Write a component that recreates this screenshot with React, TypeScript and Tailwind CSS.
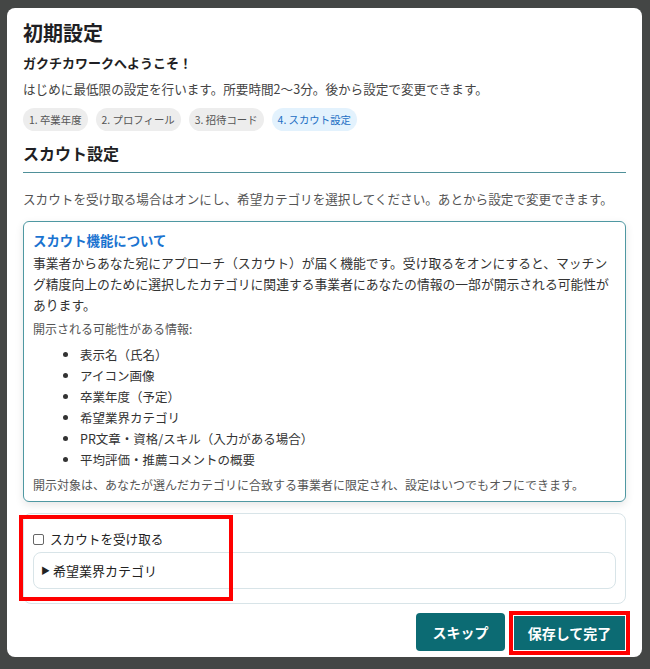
import React from "react";

const font = { fontFamily: '"Noto Sans CJK JP", "Noto Sans", sans-serif' };

const steps = ["1. 卒業年度", "2. プロフィール", "3. 招待コード", "4. スカウト設定"];
const items = [
  "表示名（氏名）",
  "アイコン画像",
  "卒業年度（予定）",
  "希望業界カテゴリ",
  "PR文章・資格/スキル（入力がある場合）",
  "平均評価・推薦コメントの概要",
];

export default function App() {
  return (
    <div className="w-[650px] h-[669px] bg-[#444645] pt-[8px] pl-[7px] overflow-hidden" style={font}>
      <div className="w-[635px] h-[649px] bg-white rounded-[8px] px-[16px] pt-[12px] flex flex-col">
        <h1 className="shrink-0 text-[20px] leading-[26px] font-bold text-[#1f1f24]">初期設定</h1>
        <p className="shrink-0 mt-[8px] text-[13px] leading-[18px] font-bold text-[#1f1f24]">ガクチカワークへようこそ！</p>
        <p className="shrink-0 mt-[8px] text-[12.6px] leading-[18px] text-[#444]">
          はじめに最低限の設定を行います。所要時間2〜3分。後から設定で変更できます。
        </p>
        <div className="shrink-0 mt-[10px] flex gap-[8px]">
          {steps.map((s, i) => (
            <span
              key={s}
              className={
                i === 3
                  ? "h-[23px] px-[6px] rounded-full bg-[#e3f2fd] text-[#1d6fc4] text-[10.4px] leading-[23px]"
                  : "h-[23px] px-[6px] rounded-full bg-[#ededed] text-[#555] text-[10.4px] leading-[23px]"
              }
            >
              {s}
            </span>
          ))}
        </div>
        <h2 className="shrink-0 mt-[11px] text-[16px] leading-[22px] font-bold text-[#1f1f24] pb-[8px] border-b border-[#4f9099]">
          スカウト設定
        </h2>
        <p className="shrink-0 mt-[17px] text-[12.6px] leading-[18px] text-[#555]">
          スカウトを受け取る場合はオンにし、希望カテゴリを選択してください。あとから設定で変更できます。
        </p>
        <div className="shrink-0 mt-[13px] h-[281px] border border-[#4f98a2] rounded-[6px] px-[9px] pt-[7px] shadow-[0_3px_8px_rgba(0,0,0,0.1)]">
          <h3 className="text-[13.4px] leading-[22px] font-bold text-[#1a73d0]">スカウト機能について</h3>
          <p className="mt-[1px] text-[12.8px] leading-[21px] text-[#333]">
            事業者からあなた宛にアプローチ（スカウト）が届く機能です。受け取るをオンにすると、マッチング精度向上のために選択したカテゴリに関連する事業者にあなたの情報の一部が開示される可能性があります。
          </p>
          <p className="mt-[4px] text-[12px] leading-[20px] text-[#555]">開示される可能性がある情報:</p>
          <ul className="mt-[5px] pl-[47px] list-disc text-[12.5px] leading-[21px] text-[#333] marker:text-[#333]">
            {items.map((t) => (
              <li key={t}>{t}</li>
            ))}
          </ul>
          <p className="mt-[5px] text-[12px] leading-[20px] text-[#555]">
            開示対象は、あなたが選んだカテゴリに合致する事業者に限定され、設定はいつでもオフにできます。
          </p>
        </div>
        <div className="shrink-0 relative mt-[11px] h-[91px] border border-[#d8e4e8] rounded-[8px] px-[9px] pt-[17px]">
          <label className="flex items-center gap-[6px] text-[12.6px] leading-[16px] text-[#222]">
            <span className="w-[11px] h-[11px] border border-[#666] rounded-[2px] bg-white" />
            スカウトを受け取る
          </label>
          <div className="mt-[5px] h-[37px] border border-[#d8e4e8] rounded-[8px] pl-[7px] flex items-center text-[13px] text-[#222]">
            <span className="text-[9px] mr-[3px]">▶</span>希望業界カテゴリ
          </div>
          <div className="absolute left-[-5px] top-[1px] w-[214px] h-[86px] border-[4px] border-[#ff0000] pointer-events-none" />
        </div>
        <div className="shrink-0 mt-[7px] flex justify-end gap-[4px] mr-[-4px]">
          <button className="mt-[2px] w-[89px] h-[38px] bg-[#0c6b73] rounded-[4px] text-white font-bold text-[14px]">
            スキップ
          </button>
          <div className="border-[4px] border-[#ff0000] p-[1px]">
            <button className="w-[111px] h-[34px] bg-[#0c6b73] text-white font-bold text-[14px]">保存して完了</button>
          </div>
        </div>
      </div>
    </div>
  );
}
